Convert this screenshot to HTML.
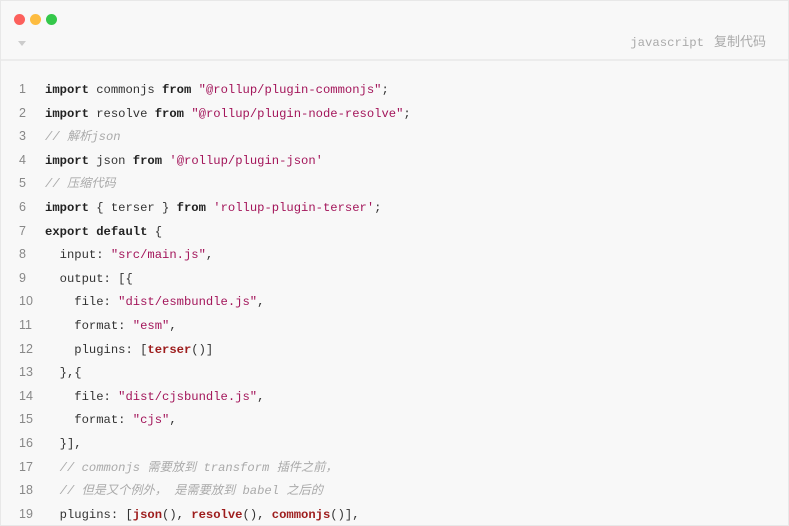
<!DOCTYPE html>
<html style="overflow:hidden"><head><meta charset="utf-8"><style>
html,body{margin:0;width:789px;height:526px;overflow:hidden;background:#fff;}
.box{position:absolute;left:0;top:0;width:787px;height:524px;background:#f8f8f8;border:1px solid #e8e8e8;overflow:hidden;}
.dot{position:absolute;top:13px;width:11px;height:11px;border-radius:50%;}
.caret{position:absolute;left:17px;top:40px;width:0;height:0;border-left:4px solid transparent;border-right:4px solid transparent;border-top:5px solid #ccc;}
.hdr{position:absolute;right:22px;top:33px;font:12.3px/16px "Liberation Mono","Noto Sans CJK SC",monospace;color:#aaa;}
.hdr span{font-family:"Liberation Sans","Noto Sans CJK SC",sans-serif;font-size:13px;margin-left:10px;}
.sep{position:absolute;left:0;right:0;top:58px;height:2px;background:#ececec;}
.code{position:absolute;left:0;top:77px;font:12.2px "Liberation Mono","Noto Sans CJK SC",monospace;color:#333;white-space:pre;}
.code div{height:23.6px;line-height:23.6px;overflow:hidden}
.ln{display:inline-block;width:44px;text-indent:18px;color:#888;font-family:"Liberation Sans",sans-serif;font-size:12.5px}
b{font-weight:bold;color:#222}
.s{color:#a3155a}
.c{color:#aaa;font-style:italic}
.f{color:#9d1c1c;font-weight:bold}
</style></head><body>
<div class="box">
<div class="dot" style="left:13px;background:#fc605c"></div>
<div class="dot" style="left:29px;background:#fdbc40"></div>
<div class="dot" style="left:45px;background:#34c84a"></div>
<div class="caret"></div>
<div class="hdr">javascript<span>复制代码</span></div>
<div class="sep"></div>
<div class="code"><div><span class="ln">1</span><b>import</b> commonjs <b>from</b> <span class="s">"@rollup/plugin-commonjs"</span>;</div><div><span class="ln">2</span><b>import</b> resolve <b>from</b> <span class="s">"@rollup/plugin-node-resolve"</span>;</div><div><span class="ln">3</span><span class="c">// 解析json</span></div><div><span class="ln">4</span><b>import</b> json <b>from</b> <span class="s">'@rollup/plugin-json'</span></div><div><span class="ln">5</span><span class="c">// 压缩代码</span></div><div><span class="ln">6</span><b>import</b> { terser } <b>from</b> <span class="s">'rollup-plugin-terser'</span>;</div><div><span class="ln">7</span><b>export</b> <b>default</b> {</div><div><span class="ln">8</span>  input: <span class="s">"src/main.js"</span>,</div><div><span class="ln">9</span>  output: [{</div><div><span class="ln">10</span>    file: <span class="s">"dist/esmbundle.js"</span>,</div><div><span class="ln">11</span>    format: <span class="s">"esm"</span>,</div><div><span class="ln">12</span>    plugins: [<span class="f">terser</span>()]</div><div><span class="ln">13</span>  },{</div><div><span class="ln">14</span>    file: <span class="s">"dist/cjsbundle.js"</span>,</div><div><span class="ln">15</span>    format: <span class="s">"cjs"</span>,</div><div><span class="ln">16</span>  }],</div><div><span class="ln">17</span>  <span class="c">// commonjs 需要放到 transform 插件之前，</span></div><div><span class="ln">18</span>  <span class="c">// 但是又个例外， 是需要放到 babel 之后的</span></div><div><span class="ln">19</span>  plugins: [<span class="f">json</span>(), <span class="f">resolve</span>(), <span class="f">commonjs</span>()],</div></div>
</div>
</body></html>
